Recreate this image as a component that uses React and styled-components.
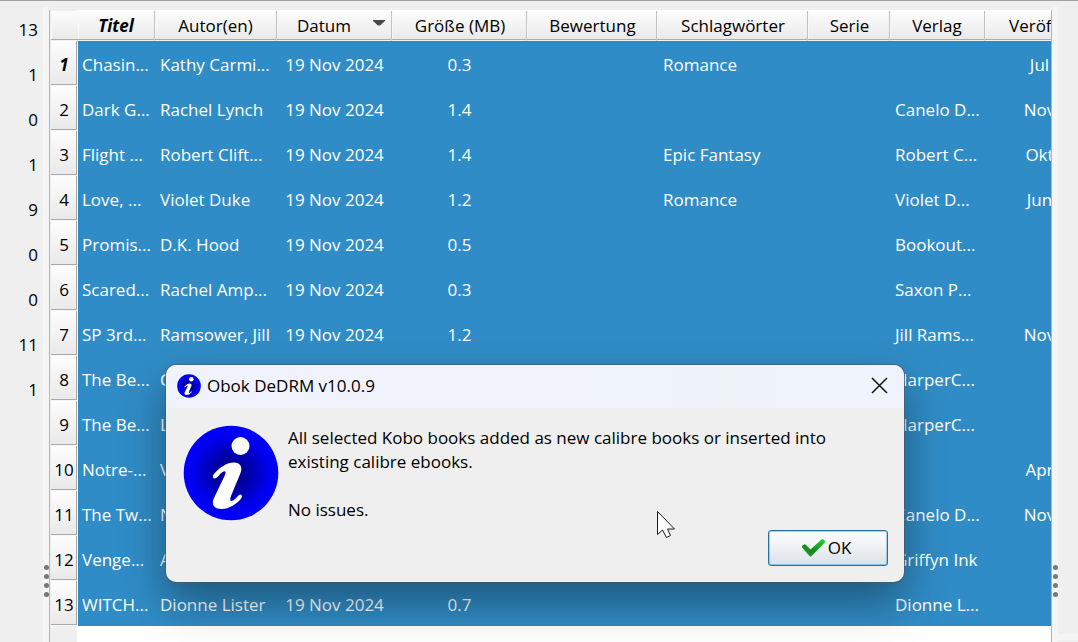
import React from "react";
import styled, { createGlobalStyle } from "styled-components";

const GlobalStyle = createGlobalStyle`
  * { box-sizing: border-box; }
  body {
    margin: 0;
    background: #efefef;
    color: #000;
    font: 17px/24px "Open Sans", "Noto Sans", sans-serif;
  }
`;

const Window = styled.main`
  position: relative;
  display: flex;
  height: 100vh;
  overflow: hidden;
  border-top: 1px solid #a3a3a3;
  padding-top: 6px;
`;

const Counts = styled.ul`
  flex: 0 0 43px;
  margin: 0;
  padding: 0 5px 0 0;
  list-style: none;
  text-align: right;
`;

const Count = styled.li`
  height: 45px;
  line-height: 45px;
`;

const Splitter = styled.div`
  flex: 0 0 6px;
  display: flex;
  flex-direction: column;
  justify-content: flex-end;
  align-items: center;
  gap: 4px;
  padding-bottom: 45px;
  background: #f5f5f5;
`;

const Dot = styled.i`
  width: 5px;
  height: 5px;
  border-radius: 50%;
  background: #777;
`;

const BookView = styled.section`
  flex: 1;
  min-width: 0;
  margin-top: 3px;
  overflow: hidden;
  border: solid #b4b4b4;
  border-width: 0 1px;
  padding: 1px 0 0 1px;
  background: linear-gradient(#efefef, #efefef) 0 0 / 27px 100% no-repeat, #fff;
`;

const Table = styled.table`
  table-layout: fixed;
  width: 1043px;
  border-collapse: separate;
  border-spacing: 0;
`;

const HeadCell = styled.th`
  position: relative;
  height: 30px;
  padding: 0 ${(p) => p.$end || 0}px 0 ${(p) => p.$start || 0}px;
  border-right: ${(p) => (p.$plain ? 0 : 1)}px solid #c2c2c2;
  border-bottom: 1px solid #f2f2f2;
  background: linear-gradient(#fdfdfd, #e9e9e9);
  box-shadow: inset 0 -1px #adadad, inset 1px 0 #f8f8f8;
  font-weight: ${(p) => (p.$current ? 700 : 400)};
  font-style: ${(p) => (p.$current ? "italic" : "normal")};
  text-align: ${(p) => p.$align || "center"};
  white-space: nowrap;
`;

const SortArrow = styled.svg`
  position: absolute;
  top: 9px;
  right: 6px;
`;

const RowHead = styled.th`
  height: 45px;
  padding: 3px 0 0;
  border-right: 1px solid #f6f6f6;
  border-bottom: 1px solid #f6f6f6;
  background: linear-gradient(#fdfdfd, #e9e9e9);
  box-shadow: inset -1px -1px #a9a9a9;
  font-weight: ${(p) => (p.$current ? 700 : 400)};
  font-style: ${(p) => (p.$current ? "italic" : "normal")};
`;

const Cell = styled.td`
  height: 45px;
  padding: 2px 0 0 ${(p) => p.$start || 0}px;
  background: #308cc6;
  color: #fff;
  text-align: ${(p) => p.$align || "left"};
  white-space: nowrap;
`;

const SidePanel = styled.aside`
  flex: 0 0 20px;
  display: flex;
  flex-direction: column;
`;

const PanelDivider = styled.div`
  height: 6px;
  margin-top: auto;
  margin-bottom: 2px;
  background: #f5f5f5;
`;

const Dialog = styled.section`
  position: absolute;
  top: 364px;
  left: 166px;
  right: 174px;
  overflow: hidden;
  border-radius: 10px;
  background: #efefef;
  box-shadow: 0 0 0 1px rgba(70, 90, 105, 0.7), 0 20px 44px rgba(0, 0, 0, 0.38);
`;

const TitleBar = styled.header`
  display: flex;
  align-items: center;
  gap: 6px;
  height: 43px;
  padding: 0 14px 2px 11px;
  background: linear-gradient(90deg, #f0f3fb, #f0f3fb 58%, #eef3f8 75%, #eff3fc);
`;

const Title = styled.h1`
  flex: 1;
  margin: 0;
  font-size: 17px;
  font-weight: 400;
`;

const CloseButton = styled.button`
  display: flex;
  padding: 2px;
  border: 0;
  background: none;
`;

const Body = styled.div`
  display: flex;
  gap: 9px;
  padding: 17px 16px 0 17px;
`;

const Message = styled.div`
  padding-top: 1px;
  p { margin: 0 0 24px; }
`;

const Actions = styled.footer`
  display: flex;
  justify-content: flex-end;
  margin-top: -16px;
  padding: 0 16px 16px;
`;

const OkButton = styled.button`
  display: flex;
  align-items: center;
  justify-content: center;
  gap: 2px;
  width: 120px;
  height: 36px;
  padding: 0 4px 0 0;
  border: 1px solid #2572a3;
  border-radius: 3px;
  background: linear-gradient(#fcfdfd, #eef1f4 50%, #d9e1e8);
  box-shadow: inset 0 0 0 1px rgba(48, 140, 198, 0.4);
  color: #000;
  font: inherit;
`;

const Pointer = styled.svg`
  position: absolute;
  top: 509px;
  left: 656px;
`;

function InfoIcon({ size, id }) {
  return (
    <svg width={size} height={size} viewBox="0 0 96 96" aria-hidden="true">
      <defs>
        <radialGradient id={id} cx="50%" cy="50%" r="50%">
          <stop offset="0" stopColor="#000088" />
          <stop offset="0.35" stopColor="#0000a4" />
          <stop offset="0.8" stopColor="#0000f0" />
          <stop offset="1" stopColor="#0000ff" />
        </radialGradient>
      </defs>
      <circle cx="48" cy="48" r="47.3" fill={`url(#${id})`} />
      <circle cx="57.500" cy="21" r="9" fill="#fff" />
      <path
        fill="#fff"
        d="M32 53.500C30 54 29 51 31 49C37 42 44 37.500 51 37.500C57 37.500 60 42 57.500 48L48 71C46.500 75 47.500 77 50 75.500C52 74.500 54 72 55.500 70.500C57.500 68 60 70.500 58.500 73C54 79 46 84 38.500 84C31 84 28 79.500 31 73L42 50C43.500 46.500 42 45.500 39.500 47C37 48.500 35 52.500 32 53.500Z"
      />
    </svg>
  );
}

const COLUMNS = [
  { key: "title", label: "Titel", width: 77, current: true, cellStart: 4 },
  { key: "author", label: "Autor(en)", width: 122, cellStart: 5 },
  { key: "date", label: "Datum", width: 115, align: "center", sorted: true, end: 20 },
  { key: "size", label: "Größe (MB)", width: 135, align: "center", start: 2 },
  { key: "rating", label: "Bewertung", width: 130, start: 2, cellStart: 6 },
  { key: "tags", label: "Schlagwörter", width: 151, start: 2, cellStart: 6 },
  { key: "series", label: "Serie", width: 82, start: 2, cellStart: 5 },
  { key: "publisher", label: "Verlag", width: 95, cellStart: 5 },
  { key: "published", label: "Veröf", width: 109, align: "center", start: 24, headAlign: "left" },
];

const DATE = "19 Nov 2024";

const BOOKS = [
  { title: "Chasin...", author: "Kathy Carmi...", date: DATE, size: "0.3", tags: "Romance", published: "Jul" },
  { title: "Dark G...", author: "Rachel Lynch", date: DATE, size: "1.4", publisher: "Canelo D...", published: "Nov" },
  { title: "Flight ...", author: "Robert Clift...", date: DATE, size: "1.4", tags: "Epic Fantasy", publisher: "Robert C...", published: "Okt" },
  { title: "Love, ...", author: "Violet Duke", date: DATE, size: "1.2", tags: "Romance", publisher: "Violet D...", published: "Jun" },
  { title: "Promis...", author: "D.K. Hood", date: DATE, size: "0.5", publisher: "Bookout..." },
  { title: "Scared...", author: "Rachel Amp...", date: DATE, size: "0.3", publisher: "Saxon P..." },
  { title: "SP 3rd...", author: "Ramsower, Jill", date: DATE, size: "1.2", publisher: "Jill Rams...", published: "Nov" },
  { title: "The Be...", author: "C", publisher: "HarperC..." },
  { title: "The Be...", author: "L", publisher: "HarperC..." },
  { title: "Notre-...", author: "V", published: "Apr" },
  { title: "The Tw...", author: "N", publisher: "Canelo D...", published: "Nov" },
  { title: "Venge...", author: "A", publisher: "Griffyn Ink" },
  { title: "WITCH...", author: "Dionne Lister", date: DATE, size: "0.7", publisher: "Dionne L..." },
];

const COUNTS = [13, 1, 0, 1, 9, 0, 0, 11, 1];

function Handle() {
  return (
    <Splitter>
      <Dot /><Dot /><Dot /><Dot />
    </Splitter>
  );
}

export default function App() {
  return (
    <Window>
      <GlobalStyle />
      <Counts>
        {COUNTS.map((n, i) => <Count key={i}>{n}</Count>)}
      </Counts>
      <Handle />
      <BookView>
        <Table>
          <colgroup>
            <col style={{ width: 27 }} />
            {COLUMNS.map((c) => <col key={c.key} style={{ width: c.width }} />)}
          </colgroup>
          <thead>
            <tr>
              <HeadCell as="td" $plain />
              {COLUMNS.map((c) => (
                <HeadCell key={c.key} scope="col" $current={c.current} $start={c.start} $end={c.end} $align={c.headAlign}>
                  {c.label}
                  {c.sorted && (
                    <SortArrow width="12" height="6" viewBox="0 0 12 6" aria-hidden="true">
                      <path d="M0 0H12V1L7 5.500H5L0 1Z" fill="#4a4a4a" />
                    </SortArrow>
                  )}
                </HeadCell>
              ))}
            </tr>
          </thead>
          <tbody>
            {BOOKS.map((book, i) => (
              <tr key={i}>
                <RowHead scope="row" $current={i === 0}>{i + 1}</RowHead>
                {COLUMNS.map((c) => (
                  <Cell key={c.key} $align={c.align} $start={c.cellStart}>{book[c.key]}</Cell>
                ))}
              </tr>
            ))}
          </tbody>
        </Table>
      </BookView>
      <Handle />
      <SidePanel><PanelDivider /></SidePanel>

      <Dialog role="dialog" aria-labelledby="dialog-title">
        <TitleBar>
          <InfoIcon size={24} id="info-small" />
          <Title id="dialog-title">Obok DeDRM v10.0.9</Title>
          <CloseButton type="button" aria-label="Close">
            <svg width="17" height="17" viewBox="0 0 17 17" stroke="#111" strokeWidth="1.500">
              <path d="M1 1L16 16M16 1L1 16" />
            </svg>
          </CloseButton>
        </TitleBar>
        <Body>
          <InfoIcon size={96} id="info-large" />
          <Message>
            <p>
              All selected Kobo books added as new calibre books or inserted into<br />
              existing calibre ebooks.
            </p>
            <p>No issues.</p>
          </Message>
        </Body>
        <Actions>
          <OkButton type="button">
            <svg width="25" height="20" viewBox="0 0 25 20" aria-hidden="true">
              <defs>
                <linearGradient id="check" x1="0" y1="1" x2="1" y2="0">
                  <stop offset="0" stopColor="#1ba22a" />
                  <stop offset="0.4" stopColor="#148a20" />
                  <stop offset="1" stopColor="#25d838" />
                </linearGradient>
              </defs>
              <path d="M1 9.500Q0.500 8.500 1.500 7.500L3 6.500Q4 6 5 7L9.500 11.500L20.500 1.500Q21.500 0.500 22.500 1.500L24 3Q24.500 4 23.500 5L10.500 18Q9.500 19 8.500 18Z" fill="url(#check)" />
            </svg>
            OK
          </OkButton>
        </Actions>
      </Dialog>
      <Pointer width="20" height="29" viewBox="0 0 20 29" aria-hidden="true">
        <path d="M1.500 1.500V24.500L6.500 20L10.500 27.500L14.500 25.500L11.500 19H18.500Z" fill="#fff" stroke="#1b1b2b" strokeWidth="1" />
      </Pointer>
    </Window>
  );
}
